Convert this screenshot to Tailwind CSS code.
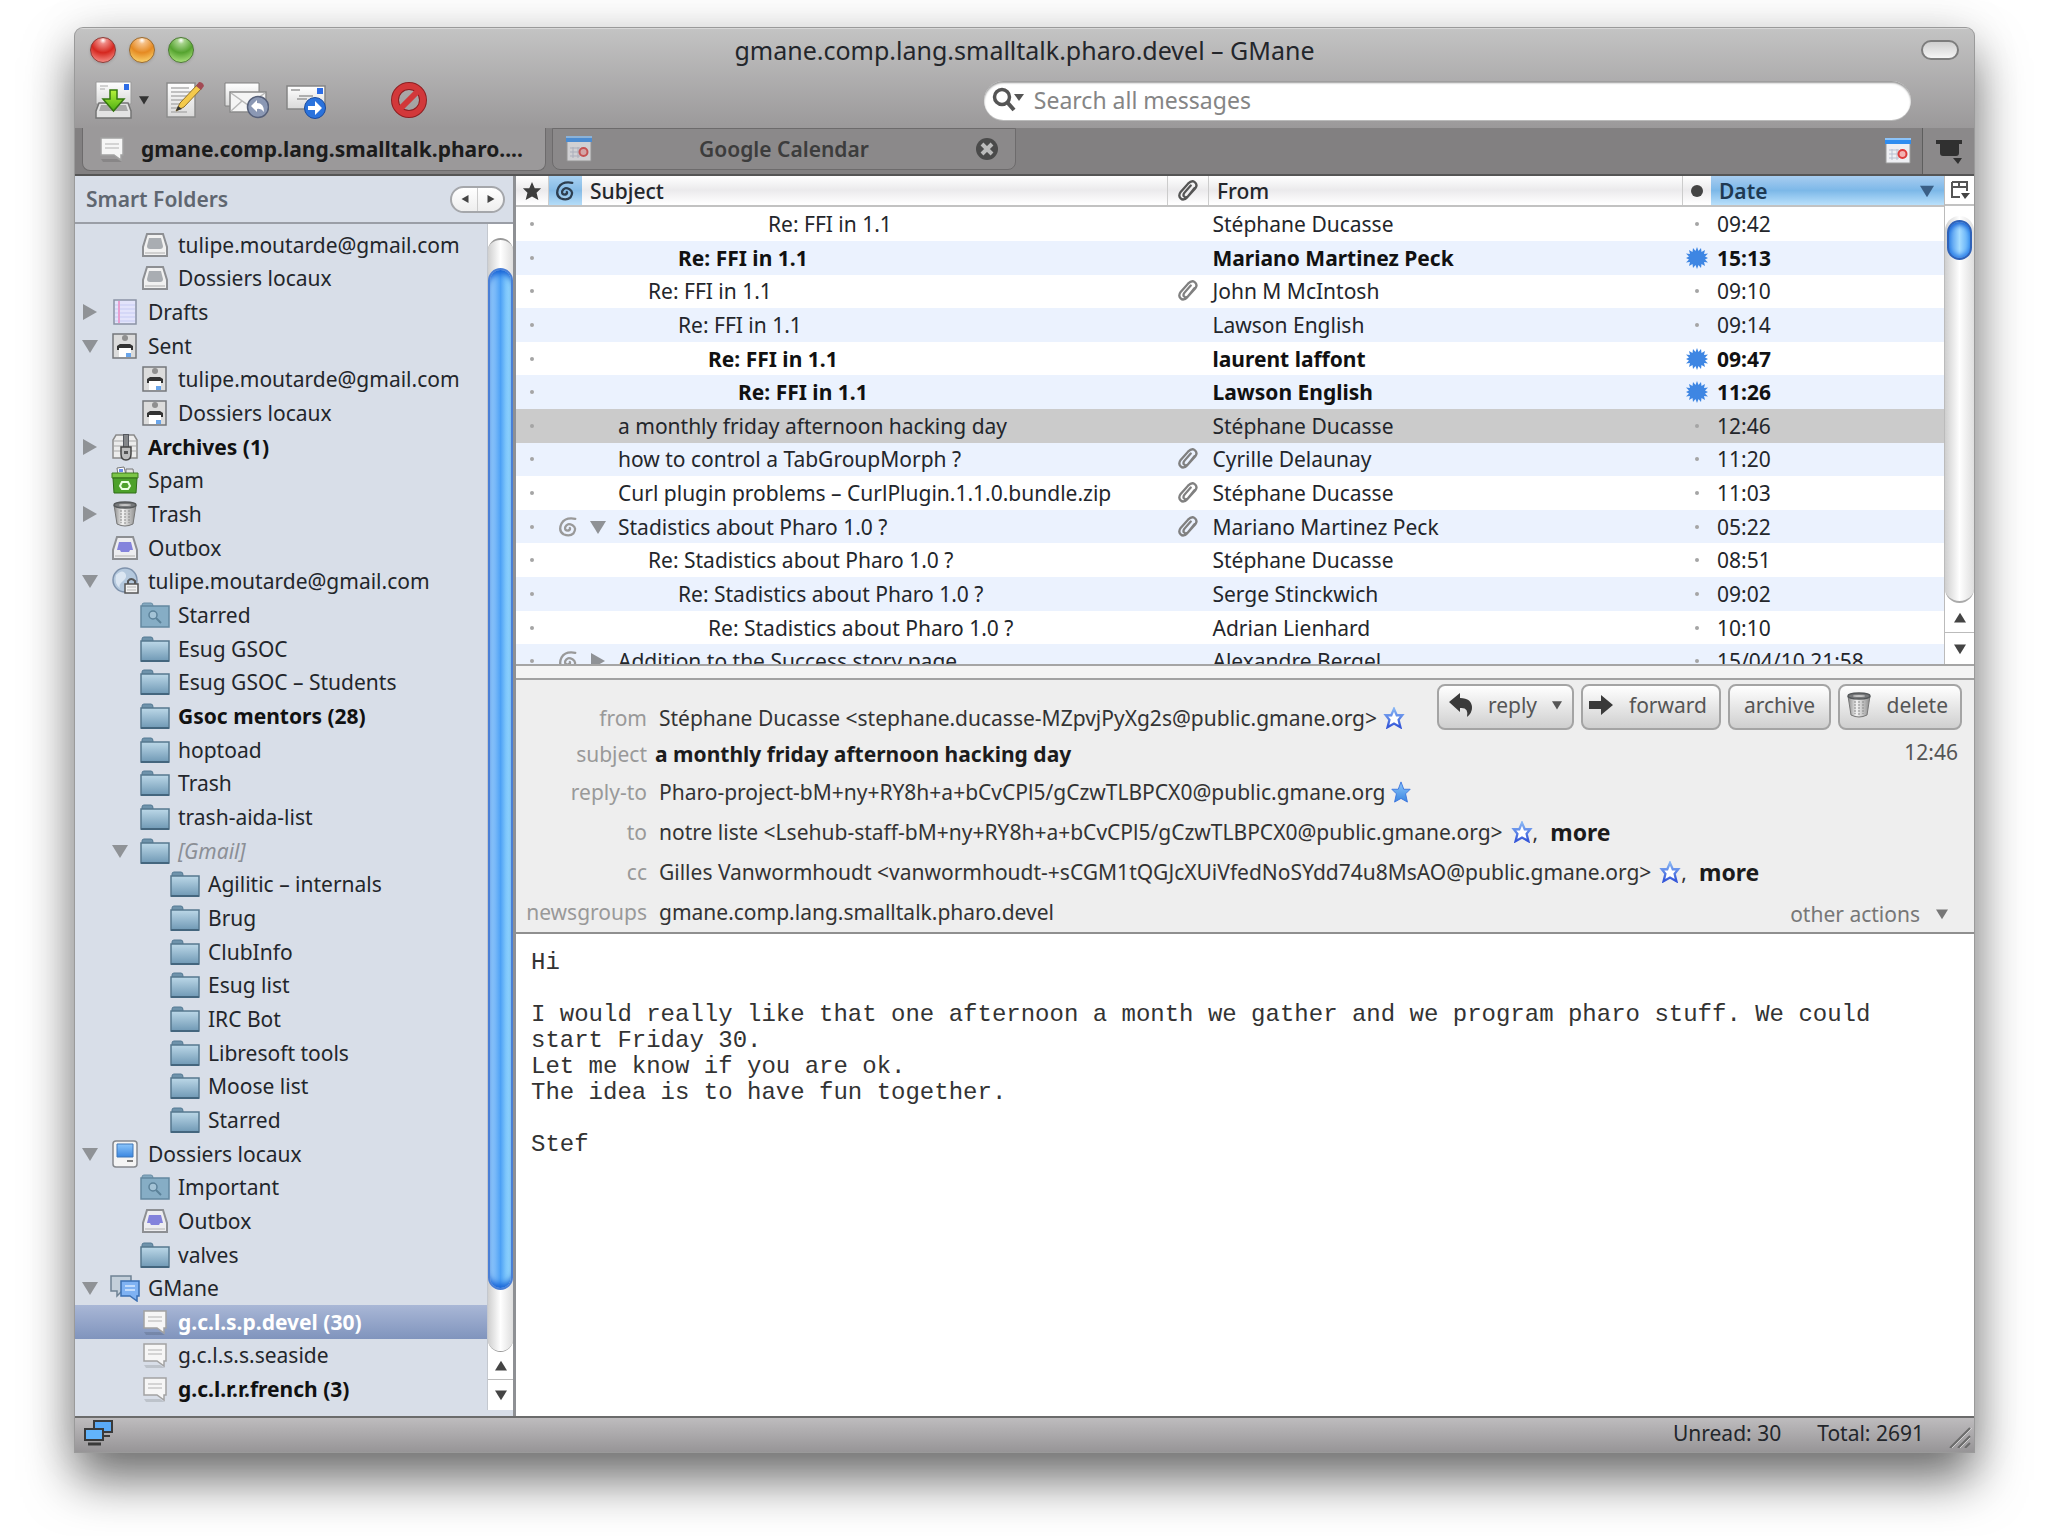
<!DOCTYPE html>
<html lang="en">
<head>
  <meta charset="UTF-8">
  <meta name="viewport" content="width=device-width, initial-scale=1.0">
  <title>gmane.comp.lang.smalltalk.pharo.devel – GMane</title>
  <script src="https://cdn.jsdelivr.net/npm/@tailwindcss/browser@4"></script>
</head>
<body class="bg-white font-['Noto_Sans','Open_Sans',sans-serif] text-[21px] leading-7 text-[#23262b]">

  <!-- Icon sprite -->
  <svg class="absolute w-0 h-0" aria-hidden="true">
    <defs>
      <linearGradient id="gFolder" x1="0" y1="0" x2="0" y2="1"><stop offset="0" stop-color="#bcd8e8"/><stop offset="1" stop-color="#7099b5"/></linearGradient>
      <linearGradient id="gPaper" x1="0" y1="0" x2="0" y2="1"><stop offset="0" stop-color="#ffffff"/><stop offset="1" stop-color="#d9d9d9"/></linearGradient>
      <linearGradient id="gGreen" x1="0" y1="0" x2="0" y2="1"><stop offset="0" stop-color="#b6f23a"/><stop offset="1" stop-color="#4caf12"/></linearGradient>
      <linearGradient id="gBlue" x1="0" y1="0" x2="0" y2="1"><stop offset="0" stop-color="#8cc6fb"/><stop offset="1" stop-color="#3a86e0"/></linearGradient>
      <linearGradient id="gCan" x1="0" y1="0" x2="1" y2="0"><stop offset="0" stop-color="#8c8c8c"/><stop offset=".4" stop-color="#f2f2f2"/><stop offset="1" stop-color="#8c8c8c"/></linearGradient>
      <linearGradient id="gStar" x1="0" y1="0" x2="0" y2="1"><stop offset="0" stop-color="#86b4f4"/><stop offset="1" stop-color="#3355d8"/></linearGradient>
    </defs>
    <symbol id="folder" viewBox="0 0 30 28">
      <path d="M2 8V4q0-2 2-2h7q2 0 2.500 3H28v4H2z" fill="#d8dee8"/>
      <path d="M2 8V4q0-2 2-2h7q2 0 2 3v3z" fill="#6f93ab" stroke="#557a94"/>
      <path d="M1 6h28v20H1z" fill="url(#gFolder)" stroke="#55788f" stroke-width="1.500"/>
      <path d="M1 26h28" stroke="#44667e" stroke-width="2"/>
    </symbol>
    <symbol id="search-folder" viewBox="0 0 30 28">
      <path d="M2 8V4q0-2 2-2h7q2 0 2 3v3z" fill="#84a9c0" stroke="#6a8ea6"/>
      <path d="M1 5h28v21H1z" fill="#86adc5" stroke="#6388a0" stroke-width="1.500"/>
      <circle cx="13" cy="14" r="4" fill="#a4c3d6" stroke="#5b8199" stroke-width="1.500"/>
      <path d="M16 17l5 5" stroke="#5b8199" stroke-width="2"/>
    </symbol>
    <symbol id="inbox" viewBox="0 0 30 28">
      <path d="M7 3h16l4 13v9H3v-9z" fill="#f1f1f1" stroke="#8d8f93" stroke-width="2"/>
      <path d="M9 7h12l2 8q0 3-3 3H10q-3 0-3-3z" fill="#a9adb2"/>
      <path d="M5 22h20" stroke="#d0d0d0" stroke-width="2"/>
    </symbol>
    <symbol id="outbox" viewBox="0 0 30 28">
      <path d="M7 3h16l4 13v9H3v-9z" fill="#ededf0" stroke="#8d8f93" stroke-width="2"/>
      <path d="M9 8h12l2 8h-3l-1 2h-8l-1-2H7z" fill="#8483dc"/>
      <path d="M5 22h20" stroke="#d0d0d0" stroke-width="2"/>
    </symbol>
    <symbol id="drafts" viewBox="0 0 30 28">
      <path d="M4 2h22v24H4z" fill="#e3e4fb" stroke="#8b93a5" stroke-width="1.500"/>
      <path d="M5 7h20M5 11h20M5 15h20M5 19h20M5 23h20" stroke="#c6cbf3"/>
      <path d="M9 3v22" stroke="#e79fd0" stroke-width="2"/>
    </symbol>
    <symbol id="sent" viewBox="0 0 30 28">
      <path d="M3 2h23v24H3z" fill="#dcdcdc" stroke="#74777b" stroke-width="1.500"/>
      <circle cx="15" cy="6" r="3" fill="#8f8f8f"/>
      <path d="M7 18v-4l3-2h10l3 2v4h-3v-2H10v2z" fill="#333"/>
      <path d="M9 16h12v9H9z" fill="#fff"/>
      <path d="M16 21h5v4h-5z" fill="#6aa5ea"/>
    </symbol>
    <symbol id="archives" viewBox="0 0 30 28">
      <path d="M6 2h18l3 5v18H3V7z" fill="#ececec" stroke="#8a8a8a" stroke-width="1.500"/>
      <path d="M4 8h22M4 13h22M4 18h22" stroke="#a9a9a9"/>
      <path d="M13 1h6v13h-6z" fill="#55585f"/>
      <path d="M15 2v12M17 2v12" stroke="#b5b5b5"/>
      <path d="M11 14h10v7q0 6-5 6t-5-6z" fill="#bdbdbd" stroke="#444" stroke-width="1.500"/>
      <path d="M14 18h4v3h-4z" fill="#555"/>
    </symbol>
    <symbol id="spam" viewBox="0 0 30 28">
      <path d="M7 2l7-1 2 8H8z" fill="#fff" stroke="#777"/><path d="M9 3h4v3H9z" fill="#6c8ce8"/>
      <path d="M16 3l7 0 1 7h-8z" fill="#e4e4e4" stroke="#777"/>
      <path d="M2 7h26v5H2z" fill="#7cc647" stroke="#3f7a21"/>
      <path d="M3 12h24l-1 15H4z" fill="#4da12b" stroke="#2f6d17"/>
      <path d="M12 16h6l2 4-2 3h-6l-2-3z" fill="none" stroke="#e9ffe0" stroke-width="2"/>
    </symbol>
    <symbol id="trash" viewBox="0 0 30 28">
      <path d="M4 5l3 19q8 4 16 0l3-19z" fill="url(#gCan)" stroke="#777"/>
      <path d="M11 10v13M15 10v14M19 10v13" stroke="#8a8a8a" stroke-width="1" stroke-dasharray="2 1"/>
      <ellipse cx="15" cy="5" rx="11" ry="3" fill="#77797b" stroke="#55585a" stroke-width="1.500"/>
      <ellipse cx="15" cy="5" rx="6" ry="1" fill="#c5c5c5"/>
    </symbol>
    <symbol id="account" viewBox="0 0 30 28">
      <circle cx="15" cy="13" r="12" fill="#b4c8dd" stroke="#7e92ac" stroke-width="1.500"/>
      <path d="M6 8q6-6 9-2t-2 8-3 7q-6-4-4-13z" fill="#dbe6f2"/>
      <path d="M18 17v-3q3-4 7 0v3" fill="none" stroke="#555" stroke-width="2"/>
      <path d="M15 17h13v9H15z" fill="#f2f2f2" stroke="#555" stroke-width="1.500"/>
      <path d="M17 20h9M17 23h9" stroke="#b5b5b5"/>
    </symbol>
    <symbol id="computer" viewBox="0 0 30 28">
      <rect x="3" y="1" width="24" height="26" rx="3" fill="#f4f4f4" stroke="#85888d" stroke-width="1.500"/>
      <path d="M7 4h16v13H7z" fill="url(#gBlue)" stroke="#3e77b8"/>
      <path d="M17 21h6" stroke="#555" stroke-width="1.500"/>
    </symbol>
    <symbol id="news" viewBox="0 0 30 28">
      <path d="M1 2h20v15h-9l-5 5v-5H1z" fill="#c3cfda" stroke="#6f8294" stroke-width="1.500"/>
      <path d="M11 7h18v15h-2v5l-7-5h-9z" fill="#7fb2f3" stroke="#3a6fb3" stroke-width="1.500"/>
      <path d="M15 12h10M15 16h10" stroke="#d9eaff" stroke-width="1.500"/>
    </symbol>
    <symbol id="group" viewBox="0 0 30 28">
      <path d="M4 24h16l5 3H6z" fill="#000" fill-opacity=".12"/>
      <path d="M4 3h22v17h-2v5l-7-5H4z" fill="#f6f6f6" stroke="#a2a2a2" stroke-width="1.500"/>
      <path d="M8 9h14M8 13h14" stroke="#c9c9c9" stroke-width="1.500"/>
    </symbol>
    <symbol id="down" viewBox="0 0 16 16"><path d="M0 2h16L8 15z" fill="currentColor"/></symbol>
    <symbol id="up" viewBox="0 0 16 16"><path d="M0 14h16L8 1z" fill="currentColor"/></symbol>
    <symbol id="right" viewBox="0 0 16 16"><path d="M1 0v16l14-8z" fill="currentColor"/></symbol>
    <symbol id="left" viewBox="0 0 16 16"><path d="M15 0v16L1 8z" fill="currentColor"/></symbol>
    <symbol id="swirl" viewBox="0 0 22 22">
      <path d="M19 2Q8 0 4 7q-4 8 2 12 7 3 11-1 4-6-1-9-6-3-8 2-1 4 3 4 3-1 2-3" fill="none" stroke="currentColor" stroke-width="2.500" stroke-linecap="round"/>
    </symbol>
    <symbol id="clip" viewBox="0 0 24 24">
      <path d="M19 9l-8 10q-4 4-7 1-3-3 0-7L12 4q4-4 7-2 4 3 1 7l-8 9q-3 2-4 0-2-1 0-4l7-8" fill="none" stroke="currentColor" stroke-width="2.500" stroke-linecap="round"/>
    </symbol>
    <symbol id="burst" viewBox="0 0 22 22">
      <path d="M11 0l1.500 4L15 1l.5 4 3.500-2-1 4 4-.5-3 3 3 1.500-3 1.500 3 3-4-.5 1 4-3.500-2-.5 4-2.500-3L11 22l-1.500-4L7 21l-.5-4L3 19l1-4-4 .5 3-3L0 11l3-1.500-3-3 4 .5-1-4 3.500 2L7 1l2.500 3z" fill="#3e86e3"/>
    </symbol>
    <symbol id="star" viewBox="0 0 22 22"><path d="M11 1l3 7h7l-5 5 2 8-7-4-7 4 2-8-5-5h7z" fill="currentColor"/></symbol>
    <symbol id="star-open" viewBox="0 0 22 24"><path d="M11 2l3 7h6l-4 5 2 8-7-4-7 4 2-8-4-5h6z" fill="#fff" stroke="url(#gStar)" stroke-width="2.500"/></symbol>
    <symbol id="star-full" viewBox="0 0 22 24"><path d="M11 1l3 8h7l-5 5 2 9-7-4-7 4 2-9-5-5h7z" fill="url(#gBlue)" stroke="#3a74de"/></symbol>
    <symbol id="calendar" viewBox="0 0 28 28">
      <path d="M2 2h24v24H2z" fill="#eeeff3" stroke="#9a9a9a"/>
      <path d="M1 1h26v6H1z" fill="#2f8df0"/><path d="M1 1h26v2H1z" fill="#8cc4fa"/>
      <path d="M5 13h10M5 17h10M5 21h10M8 12v11M13 12v11" stroke="#b9bfd0"/>
      <circle cx="18.500" cy="17" r="4" fill="#f3b2b2" stroke="#dd3b3b" stroke-width="2"/>
    </symbol>
  </svg>

  <div class="h-screen min-w-[1200px] pt-7 pb-[84px] pl-[75px] pr-[74px] overflow-hidden">
    <div class="h-full flex flex-col rounded-t-lg overflow-hidden bg-[#9b999a] ring-1 ring-[#9a9a9a] shadow-[0_28px_50px_0_rgba(0,0,0,0.55),0_0_50px_0_rgba(0,0,0,0.1)]">

      <!-- Title bar + toolbar -->
      <header class="h-[100px] shrink-0 bg-linear-to-b from-[#c3c3c3] to-[#9b999a] border-t border-[#d8d8d8]">
        <div class="h-[42px] flex items-center px-[15px]">
          <div class="w-[120px] flex gap-[13px]">
            <button aria-label="Close" class="size-[26px] rounded-full border border-[#8d3a36] bg-[radial-gradient(circle_at_50%_10%,#fff_0%,#ef8a85_14%,#d5271f_50%,#ffa9a2_100%)] shadow-sm"></button>
            <button aria-label="Minimize" class="size-[26px] rounded-full border border-[#9c6a2c] bg-[radial-gradient(circle_at_50%_10%,#fff_0%,#f6c188_14%,#e58a22_50%,#ffe680_100%)] shadow-sm"></button>
            <button aria-label="Zoom" class="size-[26px] rounded-full border border-[#4b7a33] bg-[radial-gradient(circle_at_50%_10%,#fff_0%,#a7d48c_14%,#55a32f_50%,#c1f291_100%)] shadow-sm"></button>
          </div>
          <h1 class="flex-1 text-center text-[25px]">gmane.comp.lang.smalltalk.pharo.devel – GMane</h1>
          <div class="w-[120px] flex justify-end">
            <button aria-label="Toggle toolbar" class="w-[38px] h-[20px] rounded-full border-2 border-[#7d7d7d] bg-linear-to-b from-[#cfcfcf] to-[#f5f5f5]"></button>
          </div>
        </div>
        <div class="h-[58px] flex items-center pl-[18px] pr-[63px]">
          <button aria-label="Get mail" class="flex items-center gap-1.5">
            <svg class="w-10 h-10" viewBox="0 0 40 40">
              <path d="M3 2h35v22H3z" fill="url(#gPaper)" stroke="#9a9a9a"/>
              <path d="M7 6h8M7 9h5" stroke="#aaa"/>
              <path d="M31 4h5v6h-5z" fill="#2c6ce6"/>
              <path d="M6 23h29l3 8v7H3v-7z" fill="#e3e3e3" stroke="#747474" stroke-width="1.500"/>
              <path d="M8 25h25l2 6H6z" fill="#a9a9a9"/>
              <path d="M17 10h7v9h7L20.500 31 10 19h7z" fill="url(#gGreen)" stroke="#35770f" stroke-width="1.500"/>
            </svg>
            <svg class="size-2.5 text-[#333]"><use href="#down"/></svg>
          </button>
          <button aria-label="Write" class="ml-4">
            <svg class="w-10 h-10" viewBox="0 0 40 40">
              <path d="M2 3h28v34H2z" fill="url(#gPaper)" stroke="#8c8c8c" stroke-width="1.500"/>
              <path d="M6 8h18M6 12h20M6 16h17M6 20h12M6 24h10M6 28h8M6 32h16" stroke="#b0b0b0" stroke-width="1.500"/>
              <path d="M11 31l4-8L33 4l4 4-18 19z" fill="#f4ca4c" stroke="#8f702a"/>
              <path d="M31 6l3-4q4 0 5 4l-3 4z" fill="#a24a54"/><path d="M11 31l2-5 4 3z" fill="#333"/>
            </svg>
          </button>
          <button aria-label="Reply all" class="ml-[18px]">
            <svg class="w-[46px] h-10" viewBox="0 0 46 40">
              <path d="M2 3h34v23H2z" fill="url(#gPaper)" stroke="#808080"/>
              <path d="M7 12h36v20H7z" fill="#f5f5f5" stroke="#8a8a8a" stroke-width="1.500"/>
              <path d="M8 13l17 12 17-12M8 31l11-10" fill="none" stroke="#b9b9b9" stroke-width="1.500"/>
              <circle cx="35" cy="27" r="10.500" fill="#8b98b4" stroke="#566079" stroke-width="1.500"/>
              <path d="M28 26l6-6v3q7 0 7 9-3-4-7-3v3z" fill="#fff"/>
            </svg>
          </button>
          <button aria-label="Forward" class="ml-4">
            <svg class="w-[42px] h-10" viewBox="0 0 42 40">
              <path d="M2 6h38v23H2z" fill="url(#gPaper)" stroke="#858585" stroke-width="1.500"/>
              <path d="M6 10h9M14 16h14M12 19h10" stroke="#999" stroke-width="1.500"/>
              <path d="M32 8h6v6h-6z" fill="#2c6ce6"/>
              <circle cx="30" cy="28" r="10.500" fill="#2a72dc" stroke="#1b4b9d"/>
              <path d="M23 26h7v-5l7 7-7 7v-5h-7z" fill="#fff"/>
            </svg>
          </button>
          <button aria-label="Junk" class="ml-[64px]">
            <svg class="w-9 h-9" viewBox="0 0 36 36">
              <circle cx="18" cy="18" r="14" fill="none" stroke="#8e1f22" stroke-width="8"/>
              <circle cx="18" cy="18" r="14" fill="none" stroke="#d2383a" stroke-width="6"/>
              <path d="M9 27L27 9" stroke="#d2383a" stroke-width="6"/>
            </svg>
          </button>
          <label class="ml-auto w-[51%] h-[39px] flex items-center rounded-full bg-white pl-2 shadow-[inset_0_2px_2px_#999,0_1px_0_#bbb]">
            <span class="sr-only">Search</span>
            <svg class="w-8 h-7" viewBox="0 0 32 28"><circle cx="10" cy="11" r="7.500" fill="none" stroke="#555" stroke-width="3.500"/><path d="M15 16l7 8" stroke="#555" stroke-width="4"/><path d="M22 8h10l-5 7z" fill="#555"/></svg>
            <input type="search" placeholder="Search all messages" class="flex-1 h-full ml-2.5 text-[23px] leading-8 outline-none bg-transparent placeholder:text-[#858585]">
          </label>
        </div>
      </header>

      <!-- Tabs -->
      <nav class="h-12 shrink-0 flex items-start bg-[#828081] border-b-2 border-[#555]">
        <div class="ml-[7px] w-[464px] h-[43px] flex items-center rounded-b-lg bg-[#9b999a] border border-t-0 border-[#6d6b6c] pl-[14px]">
          <svg class="w-[30px] h-7"><use href="#group"/></svg>
          <a href="#" class="ml-3.5 whitespace-nowrap font-bold text-[#1c1c1c]">gmane.comp.lang.smalltalk.pharo....</a>
        </div>
        <div class="ml-1.5 w-[464px] h-[42px] flex items-center rounded-b-lg bg-[#8b898a] border border-[#6d6b6c] px-3">
          <svg class="size-7 opacity-70"><use href="#calendar"/></svg>
          <a href="#" class="flex-1 text-center font-semibold text-[#3c3c3c]">Google Calendar</a>
          <button aria-label="Close tab" class="mr-1">
            <svg class="size-6" viewBox="0 0 24 24"><circle cx="12" cy="12" r="11" fill="#4a4a4a"/><path d="M7 7l10 10M17 7L7 17" stroke="#bbb" stroke-width="4"/></svg>
          </button>
        </div>
        <button aria-label="Calendar" class="ml-auto mr-2.5 h-full"><svg class="size-7"><use href="#calendar"/></svg></button>
        <button aria-label="All tabs" class="w-[52px] h-full flex items-center justify-center bg-[#8b898a] border-l border-[#5e5e5e]">
          <svg class="w-7 h-7" viewBox="0 0 28 28"><path d="M1 3h26v4h-3v9q0 3-3 3H8q-3 0-3-3V7H1z" fill="#303030"/><path d="M18 21h9l-4 6z" fill="#303030"/></svg>
        </button>
      </nav>

      <div class="flex-1 min-h-0 flex">
        <!-- Folder pane -->
        <aside class="w-[441px] shrink-0 flex flex-col bg-[#d8dee8] border-r-3 border-[#8e9094]">
          <div class="h-12 shrink-0 flex items-center justify-between pl-[11px] pr-2 border-b-2 border-[#9a9ea6]">
            <h2 class="font-semibold text-[#5f6670]">Smart Folders</h2>
            <div class="flex h-[27px] w-[55px] rounded-full border-2 border-[#a5a7ab] bg-linear-to-b from-white to-[#eee] text-[#444]">
              <button aria-label="Previous view" class="flex-1 flex items-center justify-center border-r border-[#ccc]"><svg class="size-2"><use href="#left"/></svg></button>
              <button aria-label="Next view" class="flex-1 flex items-center justify-center"><svg class="size-2"><use href="#right"/></svg></button>
            </div>
          </div>
          <div class="flex-1 min-h-0 flex">
            <ul id="folders" class="flex-1 min-w-0 flex flex-col pt-1 pb-2.5"></ul>
            <div class="w-[26px] flex flex-col mb-1.5 border-l border-[#c4c8cf] bg-white text-[#444]">
              <div class="flex-1 flex flex-col mt-3.5 rounded-full bg-linear-to-r from-[#cfcfcf] via-white to-[#dedede] border-t-2 border-b border-[#999] pt-7 pb-[61px]">
                <div class="flex-1 rounded-full border-2 border-[#4a7fd6] bg-linear-to-r from-[#9fd0fb] via-[#4da1f5] to-[#a9e8ff] shadow-[inset_0_7px_6px_-3px_#1763d6,inset_0_-7px_6px_-3px_#1763d6]"></div>
              </div>
              <div class="h-7 flex items-center justify-center border-b border-[#bbb]"><svg class="size-3"><use href="#up"/></svg></div>
              <div class="h-[30px] flex items-center justify-center"><svg class="size-3"><use href="#down"/></svg></div>
            </div>
          </div>
        </aside>

        <main class="flex-1 min-w-0 flex flex-col">
          <!-- Thread pane -->
          <section class="h-[490px] shrink-0 flex bg-white overflow-hidden border-b-2 border-[#a5a5a5]">
            <div class="flex-1 min-w-0">
              <table class="w-full h-[502px] table-fixed border-collapse leading-6">
                <thead>
                  <tr class="h-[30px] bg-linear-to-b from-white via-[#ebeaec] to-white border-b-2 border-[#c2c2c2] text-left">
                    <th class="w-8 border-r border-[#ccc]"><svg class="size-5 mx-auto text-[#3d3d3d]"><use href="#star"/></svg></th>
                    <th class="w-[34px] bg-linear-to-b from-[#a8d1f2] via-[#86bbe6] to-[#b4dcf8]"><svg class="size-5 mx-auto text-[#2d3e50]"><use href="#swirl"/></svg></th>
                    <th class="w-[41%] pl-2 font-medium border-r border-[#ccc]">Subject</th>
                    <th class="w-[41px] border-r border-[#ccc]"><svg class="size-[22px] mx-auto text-[#555]"><use href="#clip"/></svg></th>
                    <th class="pl-2 font-medium border-r border-[#ccc]">From</th>
                    <th class="w-[29px]"><div class="size-3 mx-auto rounded-full bg-[#444]"></div></th>
                    <th class="w-[233px] bg-linear-to-b from-[#a8cdf0] via-[#7cb8e8] to-[#b9e0fb]">
                      <div class="flex items-center justify-between pl-2 pr-2.5 font-semibold text-[#1f3a52]">Date <svg class="size-3.5 text-[#3a5f86]"><use href="#down"/></svg></div>
                    </th>
                  </tr>
                </thead>
                <tbody id="messages"></tbody>
              </table>
            </div>
            <div class="w-[30px] shrink-0 flex flex-col border-l border-[#bbb] text-[#444]">
              <button aria-label="Choose columns" class="h-[30px] flex items-center justify-center border-b-2 border-[#c2c2c2]">
                <svg class="w-5 h-5" viewBox="0 0 20 20"><path d="M2 2h15v9M2 2v15h8M2 7h15M9 2v5" fill="none" stroke="#555" stroke-width="2"/><path d="M11 13h9l-5 6z" fill="#444"/></svg>
              </button>
              <div class="flex-1 flex flex-col mt-2.5 rounded-full bg-linear-to-r from-[#cfcfcf] via-white to-[#dedede] border-b-2 border-[#aaa] pt-1">
                <div class="h-10 mx-0.5 rounded-full border-2 border-[#2f62b8] bg-linear-to-r from-[#3f8eea] via-[#a5dcff] to-[#4fa4f5] shadow-[inset_0_5px_5px_-2px_#1763d6,inset_0_-5px_5px_-2px_#2f80e8]"></div>
              </div>
              <div class="h-[30px] flex items-center justify-center border-b border-[#bbb]"><svg class="size-3"><use href="#up"/></svg></div>
              <div class="h-[31px] flex items-center justify-center"><svg class="size-3"><use href="#down"/></svg></div>
            </div>
          </section>
          <div class="h-[14px] shrink-0 bg-[#f4f4f4] border-b-2 border-[#a2a2a2]"></div>

          <!-- Message header -->
          <section class="shrink-0 bg-[#eee] border-b-2 border-[#8f8f8f] text-[#333]">
            <div class="flex h-[92px]">
              <dl class="flex-1 min-w-0 pt-5">
                <div class="h-9 flex items-center"><dt class="w-[131px] shrink-0 text-right text-[#999]">from</dt><dd class="ml-3 flex items-center gap-1.5 whitespace-nowrap">Stéphane Ducasse &lt;stephane.ducasse-MZpvjPyXg2s@public.gmane.org&gt; <svg class="size-[22px] shrink-0"><use href="#star-open"/></svg></dd></div>
                <div class="h-9 flex items-center"><dt class="w-[131px] shrink-0 text-right text-[#999]">subject</dt><dd class="ml-2 font-bold text-[#1c1c1c]">a monthly friday afternoon hacking day</dd></div>
              </dl>
              <div class="flex flex-col pt-1 pr-3">
                <div class="flex gap-[7px] text-[#555]">
                  <button class="w-[137px] h-[46px] flex items-center justify-between px-2.5 pb-1 rounded-lg border-2 border-[#a4a4a4] bg-linear-to-b from-white to-[#cfcfcf]">
                    <svg class="w-6 h-6" viewBox="0 0 24 24"><path d="M0 9l11-9v5q12 0 12 10 0 5-5 9 2-10-7-9v4z" fill="#3a3a3a"/></svg>reply<svg class="size-2.5"><use href="#down"/></svg>
                  </button>
                  <button class="w-[140px] h-[46px] flex items-center justify-between pl-1.5 pr-3 pb-1 rounded-lg border-2 border-[#a4a4a4] bg-linear-to-b from-white to-[#cfcfcf]">
                    <svg class="w-6 h-6" viewBox="0 0 24 24"><path d="M0 8h12V2l12 10-12 10v-6H0z" fill="#3a3a3a"/></svg>forward
                  </button>
                  <button class="w-[103px] h-[46px] pb-1 rounded-lg border-2 border-[#a4a4a4] bg-linear-to-b from-white to-[#cfcfcf]">archive</button>
                  <button class="w-[124px] h-[46px] flex items-center justify-between pl-1 pr-3 pb-1 rounded-lg border-2 border-[#a4a4a4] bg-linear-to-b from-white to-[#cfcfcf]">
                    <svg class="w-[30px] h-7"><use href="#trash"/></svg>delete
                  </button>
                </div>
                <time class="mt-2 pr-1 text-right text-[#555]">12:46</time>
              </div>
            </div>
            <div class="flex items-end">
              <dl class="flex-1 min-w-0 overflow-hidden whitespace-nowrap">
                <div class="h-10 flex items-center"><dt class="w-[131px] shrink-0 text-right text-[#999]">reply-to</dt><dd class="ml-3 flex items-center gap-1">Pharo-project-bM+ny+RY8h+a+bCvCPl5/gCzwTLBPCX0@public.gmane.org <svg class="size-[22px]"><use href="#star-full"/></svg></dd></div>
                <div class="h-10 flex items-center"><dt class="w-[131px] shrink-0 text-right text-[#999]">to</dt><dd class="ml-3 flex items-center">notre liste &lt;Lsehub-staff-bM+ny+RY8h+a+bCvCPl5/gCzwTLBPCX0@public.gmane.org&gt;<svg class="size-[22px] ml-2"><use href="#star-open"/></svg>,<a href="#" class="ml-3 font-bold text-[23px] text-[#1c1c1c]">more</a></dd></div>
                <div class="h-10 flex items-center"><dt class="w-[131px] shrink-0 text-right text-[#999]">cc</dt><dd class="ml-3 flex items-center">Gilles Vanwormhoudt &lt;vanwormhoudt-+sCGM1tQGJcXUiVfedNoSYdd74u8MsAO@public.gmane.org&gt;<svg class="size-[22px] ml-2"><use href="#star-open"/></svg>,<a href="#" class="ml-3 font-bold text-[23px] text-[#1c1c1c]">more</a></dd></div>
                <div class="h-10 flex items-center"><dt class="w-[131px] shrink-0 text-right text-[#999]">newsgroups</dt><dd class="ml-3">gmane.comp.lang.smalltalk.pharo.devel</dd></div>
              </dl>
              <button class="w-[200px] h-9 flex items-center justify-end gap-4 pr-[26px] whitespace-nowrap text-[#777]">other actions <svg class="size-3 shrink-0"><use href="#down"/></svg></button>
            </div>
          </section>

          <!-- Message body -->
          <article class="flex-1 bg-white pl-[15px] pr-6 pt-4 font-['Liberation_Mono',monospace] text-2xl leading-[26px] text-[#333] whitespace-pre-wrap">Hi

I would really like that one afternoon a month we gather and we program pharo stuff. We could start Friday 30.
Let me know if you are ok.
The idea is to have fun together.

Stef</article>
        </main>
      </div>

      <!-- Status bar -->
      <footer class="h-9 shrink-0 flex items-center gap-9 pl-2 pb-1 bg-linear-to-b from-[#bebcbe] to-[#979597] border-t-2 border-[#6b6b6b]">
        <svg class="w-[30px] h-7 mr-auto" viewBox="0 0 30 28">
          <path d="M11 2h18v11H11z" fill="#5aa9f5" stroke="#3a3a3a" stroke-width="2"/><path d="M18 17h9" stroke="#3a3a3a" stroke-width="2"/>
          <path d="M2 10h18v11H2z" fill="#62b4fb" stroke="#3a3a3a" stroke-width="2"/><path d="M5 25h13" stroke="#3a3a3a" stroke-width="3"/>
        </svg>
        <span>Unread: 30</span>
        <span>Total: 2691</span>
        <svg class="w-6 h-6 self-end -ml-3 mr-0.5" viewBox="0 0 24 24"><path d="M2 24L22 4M10 24L22 12M17 24l5-5" stroke="#6c6c6c" stroke-width="2"/><path d="M4 24L24 4M12 24l10-10" stroke="#d0d0d0"/></svg>
      </footer>
    </div>
  </div>

  <script>
    // depth, twisty, icon, label, style
    var folders = [
      [1, '', 'inbox', 'tulipe.moutarde@gmail.com'],
      [1, '', 'inbox', 'Dossiers locaux'],
      [0, 'right', 'drafts', 'Drafts'],
      [0, 'down', 'sent', 'Sent'],
      [1, '', 'sent', 'tulipe.moutarde@gmail.com'],
      [1, '', 'sent', 'Dossiers locaux'],
      [0, 'right', 'archives', 'Archives (1)', 'unread'],
      [0, '', 'spam', 'Spam'],
      [0, 'right', 'trash', 'Trash'],
      [0, '', 'outbox', 'Outbox'],
      [0, 'down', 'account', 'tulipe.moutarde@gmail.com'],
      [1, '', 'search-folder', 'Starred'],
      [1, '', 'folder', 'Esug GSOC'],
      [1, '', 'folder', 'Esug GSOC – Students'],
      [1, '', 'folder', 'Gsoc mentors (28)', 'unread'],
      [1, '', 'folder', 'hoptoad'],
      [1, '', 'folder', 'Trash'],
      [1, '', 'folder', 'trash-aida-list'],
      [1, 'down', 'folder', '[Gmail]', 'muted'],
      [2, '', 'folder', 'Agilitic – internals'],
      [2, '', 'folder', 'Brug'],
      [2, '', 'folder', 'ClubInfo'],
      [2, '', 'folder', 'Esug list'],
      [2, '', 'folder', 'IRC Bot'],
      [2, '', 'folder', 'Libresoft tools'],
      [2, '', 'folder', 'Moose list'],
      [2, '', 'folder', 'Starred'],
      [0, 'down', 'computer', 'Dossiers locaux'],
      [1, '', 'search-folder', 'Important'],
      [1, '', 'outbox', 'Outbox'],
      [1, '', 'folder', 'valves'],
      [0, 'down', 'news', 'GMane'],
      [1, '', 'group', 'g.c.l.s.p.devel (30)', 'selected'],
      [1, '', 'group', 'g.c.l.s.s.seaside'],
      [1, '', 'group', 'g.c.l.r.r.french (3)', 'unread']
    ];
    var folderIndent = ['pl-[7px]', 'pl-[37px]', 'pl-[67px]'];
    var folderStyle = {
      unread: 'font-bold text-[#111]',
      muted: 'italic text-[#8b8f96]',
      selected: 'font-bold text-white'
    };
    document.getElementById('folders').innerHTML = folders.map(function (f) {
      var bg = f[4] == 'selected' ? 'bg-linear-to-b from-[#a9b7d6] to-[#8094bd]' : '';
      return '<li class="flex-1 min-h-0 flex items-center ' + folderIndent[f[0]] + ' ' + bg + '">' +
        '<svg class="size-4 mr-3 shrink-0 text-[#8f9296]">' + (f[1] ? '<use href="#' + f[1] + '"/>' : '') + '</svg>' +
        '<svg class="w-[30px] h-7 shrink-0"><use href="#' + f[2] + '"/></svg>' +
        '<a href="#" class="ml-2 leading-7 whitespace-nowrap ' + (folderStyle[f[4]] || '') + '">' + f[3] + '</a></li>';
    }).join('');

    // level, subject, from, date, flags (u: unread, a: attachment, s: selected), twisty
    var messages = [
      [5, 'Re: FFI in 1.1', 'Stéphane Ducasse', '09:42', ''],
      [2, 'Re: FFI in 1.1', 'Mariano Martinez Peck', '15:13', 'u'],
      [1, 'Re: FFI in 1.1', 'John M McIntosh', '09:10', 'a'],
      [2, 'Re: FFI in 1.1', 'Lawson English', '09:14', ''],
      [3, 'Re: FFI in 1.1', 'laurent laffont', '09:47', 'u'],
      [4, 'Re: FFI in 1.1', 'Lawson English', '11:26', 'u'],
      [0, 'a monthly friday afternoon hacking day', 'Stéphane Ducasse', '12:46', 's'],
      [0, 'how to control a TabGroupMorph ?', 'Cyrille Delaunay', '11:20', 'a'],
      [0, 'Curl plugin problems – CurlPlugin.1.1.0.bundle.zip', 'Stéphane Ducasse', '11:03', 'a'],
      [0, 'Stadistics about Pharo 1.0 ?', 'Mariano Martinez Peck', '05:22', 'a', 'down'],
      [1, 'Re: Stadistics about Pharo 1.0 ?', 'Stéphane Ducasse', '08:51', ''],
      [2, 'Re: Stadistics about Pharo 1.0 ?', 'Serge Stinckwich', '09:02', ''],
      [3, 'Re: Stadistics about Pharo 1.0 ?', 'Adrian Lienhard', '10:10', ''],
      [0, 'Addition to the Success story page', 'Alexandre Bergel', '15/04/10 21:58', '', 'right']
    ];
    var indent = ['pl-2', 'pl-[38px]', 'pl-[68px]', 'pl-[98px]', 'pl-[128px]', 'pl-[158px]'];
    document.getElementById('messages').innerHTML = messages.map(function (m, i) {
      var unread = m[4].includes('u');
      var bg = m[4].includes('s') ? 'bg-[#cbcbcb]' : i % 2 ? 'bg-[#ebf2fe]' : 'bg-white';
      var dot = '<div class="size-1 mx-auto rounded-full bg-[#a5a5a5]"></div>';
      return '<tr class="whitespace-nowrap ' + bg + (unread ? ' font-bold text-[#111]' : '') + '">' +
        '<td>' + dot + '</td>' +
        '<td>' + (m[5] ? '<svg class="size-5 ml-2.5 text-[#999]"><use href="#swirl"/></svg>' : '') + '</td>' +
        '<td class="' + indent[m[0]] + '"><div class="flex items-center gap-3"><svg class="size-4 text-[#8f9296]">' + (m[5] ? '<use href="#' + m[5] + '"/>' : '') + '</svg>' + m[1] + '</div></td>' +
        '<td>' + (m[4].includes('a') ? '<svg class="size-[22px] mx-auto text-[#808080]"><use href="#clip"/></svg>' : '') + '</td>' +
        '<td class="pl-1">' + m[2] + '</td>' +
        '<td>' + (unread ? '<svg class="size-[22px] mx-auto"><use href="#burst"/></svg>' : dot) + '</td>' +
        '<td class="pl-1.5">' + m[3] + '</td></tr>';
    }).join('');
  </script>
</body>
</html>
